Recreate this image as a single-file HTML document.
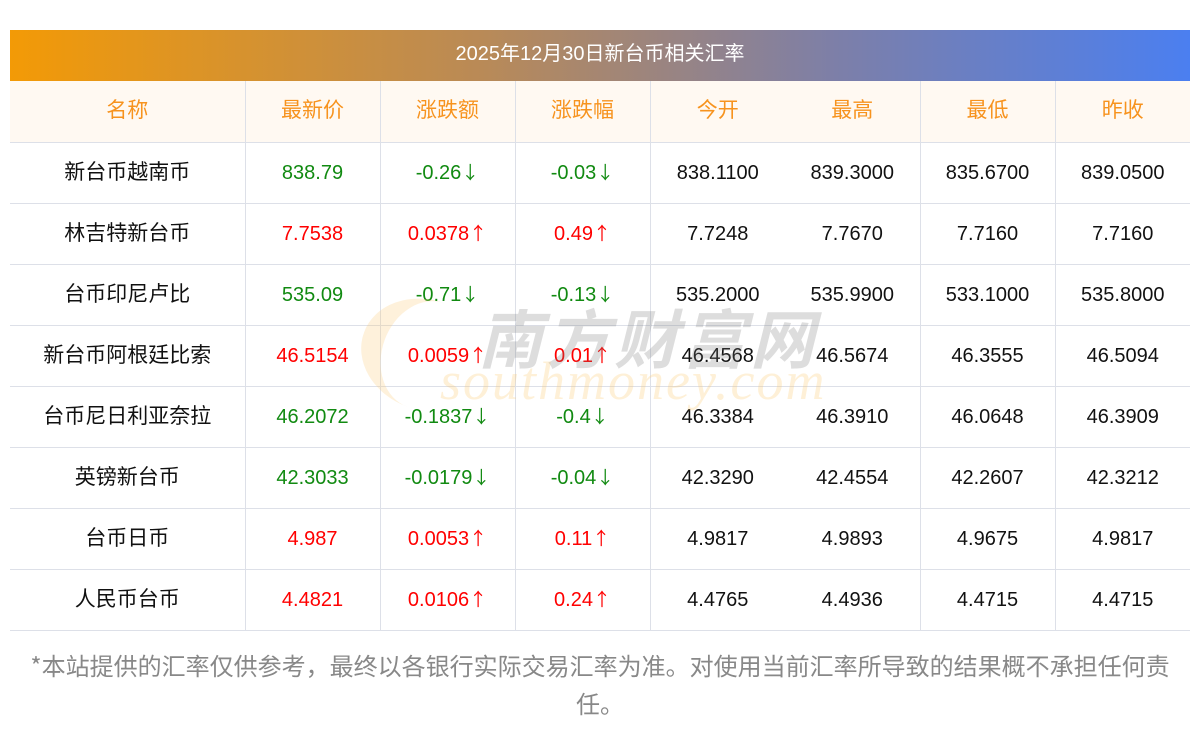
<!DOCTYPE html>
<html><head><meta charset="utf-8"><style>
body{margin:0;background:#fff;font-family:"Liberation Sans","Noto Sans CJK SC",sans-serif;}
.wrap{position:absolute;left:10px;top:30px;width:1180px;}
.title{height:51px;line-height:49px;text-align:center;color:#fff;font-size:20px;background:linear-gradient(90deg,#f39a06,#b98a57 40%,#7d7fa8 70%,#4b7ff0);}
table{border-collapse:collapse;width:1180px;table-layout:fixed;}
td{height:61px;border-bottom:1px solid #dde0e8;text-align:center;font-size:20px;color:#111;padding:0;line-height:24px;box-sizing:border-box;}
td.c{font-family:"Noto Sans CJK SC",sans-serif;padding-bottom:4px;font-size:21px;}
tr.h td{background:#fff9f2;color:#f7931e;font-family:"Noto Sans CJK SC",sans-serif;padding-bottom:4px;font-size:21px;}
td.b{border-right:1px solid #dde0e8;}
.a{font-family:"Noto Sans CJK SC",sans-serif;font-size:18px;}
.g{color:#118a11}.r{color:#f00}
.note{position:absolute;left:10px;top:646px;width:1180px;text-align:center;font-size:24px;color:#888;line-height:38px;font-family:"Noto Sans CJK SC",sans-serif;}
.wm1{position:absolute;left:478px;top:290px;font-size:64px;color:rgba(120,120,120,0.25);letter-spacing:4px;font-style:italic;font-weight:bold;font-family:"Noto Sans CJK SC",sans-serif;}
.wm2{position:absolute;left:440px;top:350px;font-size:54px;color:rgba(250,200,110,0.28);font-family:"Liberation Serif",serif;font-style:italic;letter-spacing:2px;}
.wm3{position:absolute;left:360px;top:300px;width:110px;height:110px;border-radius:50%;border-left:22px solid rgba(250,200,110,0.25);transform:rotate(20deg);}
</style></head><body>
<div class="wrap">
<div class="title">2025年12月30日新台币相关汇率</div>
<table>
<colgroup><col style="width:235px"><col style="width:135px"><col style="width:135px"><col style="width:135px"><col style="width:135px"><col style="width:135px"><col style="width:135px"><col style="width:135px"></colgroup>
<tr class="h"><td class="b">名称</td><td class="b">最新价</td><td class="b">涨跌额</td><td class="b">涨跌幅</td><td>今开</td><td class="b">最高</td><td class="b">最低</td><td>昨收</td></tr>
<tr><td class="b c">新台币越南币</td><td class="b g">838.79</td><td class="b g">-0.26<span class="a">↓</span></td><td class="b g">-0.03<span class="a">↓</span></td><td>838.1100</td><td class="b">839.3000</td><td class="b">835.6700</td><td>839.0500</td></tr>
<tr><td class="b c">林吉特新台币</td><td class="b r">7.7538</td><td class="b r">0.0378<span class="a">↑</span></td><td class="b r">0.49<span class="a">↑</span></td><td>7.7248</td><td class="b">7.7670</td><td class="b">7.7160</td><td>7.7160</td></tr>
<tr><td class="b c">台币印尼卢比</td><td class="b g">535.09</td><td class="b g">-0.71<span class="a">↓</span></td><td class="b g">-0.13<span class="a">↓</span></td><td>535.2000</td><td class="b">535.9900</td><td class="b">533.1000</td><td>535.8000</td></tr>
<tr><td class="b c">新台币阿根廷比索</td><td class="b r">46.5154</td><td class="b r">0.0059<span class="a">↑</span></td><td class="b r">0.01<span class="a">↑</span></td><td>46.4568</td><td class="b">46.5674</td><td class="b">46.3555</td><td>46.5094</td></tr>
<tr><td class="b c">台币尼日利亚奈拉</td><td class="b g">46.2072</td><td class="b g">-0.1837<span class="a">↓</span></td><td class="b g">-0.4<span class="a">↓</span></td><td>46.3384</td><td class="b">46.3910</td><td class="b">46.0648</td><td>46.3909</td></tr>
<tr><td class="b c">英镑新台币</td><td class="b g">42.3033</td><td class="b g">-0.0179<span class="a">↓</span></td><td class="b g">-0.04<span class="a">↓</span></td><td>42.3290</td><td class="b">42.4554</td><td class="b">42.2607</td><td>42.3212</td></tr>
<tr><td class="b c">台币日币</td><td class="b r">4.987</td><td class="b r">0.0053<span class="a">↑</span></td><td class="b r">0.11<span class="a">↑</span></td><td>4.9817</td><td class="b">4.9893</td><td class="b">4.9675</td><td>4.9817</td></tr>
<tr><td class="b c">人民币台币</td><td class="b r">4.4821</td><td class="b r">0.0106<span class="a">↑</span></td><td class="b r">0.24<span class="a">↑</span></td><td>4.4765</td><td class="b">4.4936</td><td class="b">4.4715</td><td>4.4715</td></tr>
</table>
</div>
<div class="wm3"></div>
<div class="wm1">南方财富网</div>
<div class="wm2">southmoney.com</div>
<div class="note">*本站提供的汇率仅供参考，最终以各银行实际交易汇率为准。对使用当前汇率所导致的结果概不承担任何责<br>任。</div>
</body></html>
